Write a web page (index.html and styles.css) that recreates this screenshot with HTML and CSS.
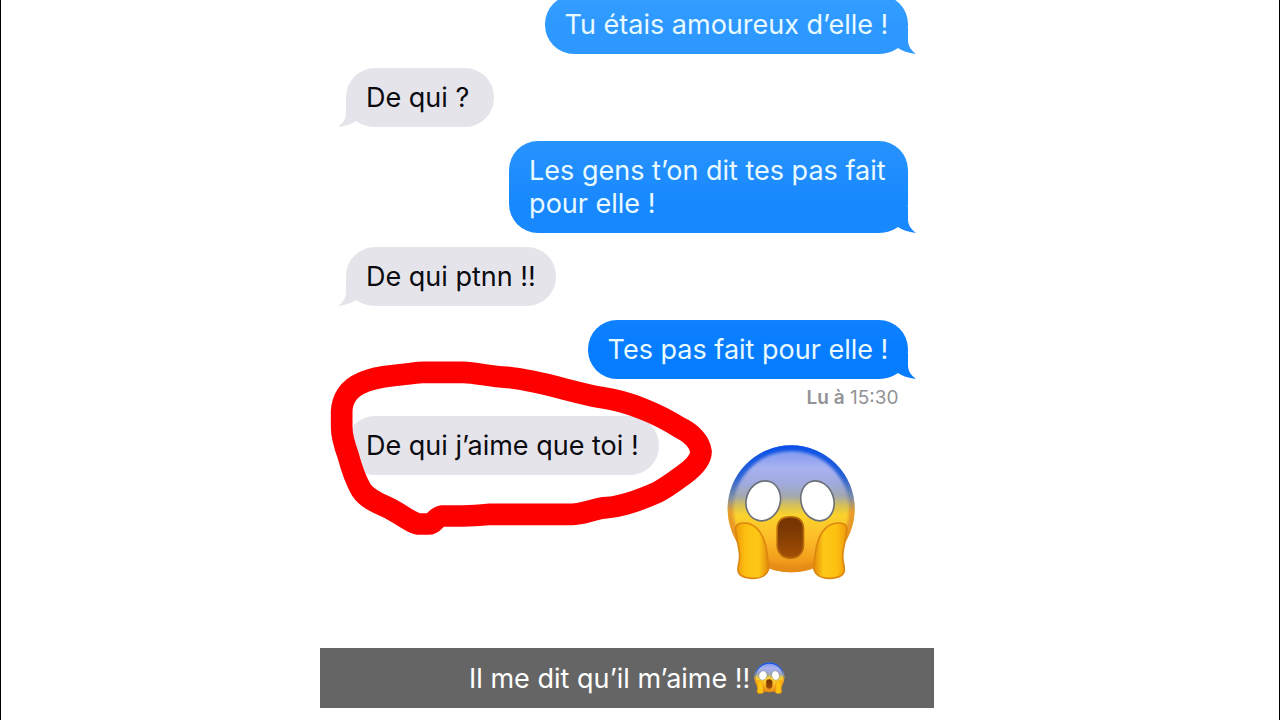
FILE: index.html
```html
<!DOCTYPE html>
<html lang="fr">
<head>
<meta charset="utf-8">
<meta name="viewport" content="width=device-width, initial-scale=1">
<title>Conversation</title>
<link rel="stylesheet" href="styles.css">
</head>
<body>
<svg class="defs" aria-hidden="true">
  <defs>
    <linearGradient id="skin" x1="0" y1="0" x2="0" y2="1">
      <stop offset="0" stop-color="#7391f0"/>
      <stop offset=".18" stop-color="#a9b2f0"/>
      <stop offset=".3" stop-color="#a0aade"/>
      <stop offset=".4" stop-color="#a3a9b0"/>
      <stop offset=".47" stop-color="#d4bf5a"/>
      <stop offset=".55" stop-color="#fbd32c"/>
      <stop offset=".75" stop-color="#fdba28"/>
      <stop offset="1" stop-color="#e98a13"/>
    </linearGradient>
    <linearGradient id="edge" x1="0" y1="0" x2="0" y2="1">
      <stop offset="0" stop-color="#0a50e8"/>
      <stop offset=".25" stop-color="#2862d5"/>
      <stop offset=".42" stop-color="#8490a0"/>
      <stop offset=".52" stop-color="#e89d2c"/>
      <stop offset="1" stop-color="#e58a16"/>
    </linearGradient>
    <linearGradient id="mouth" x1="0" y1="0" x2="0" y2="1">
      <stop offset="0" stop-color="#743402"/>
      <stop offset=".35" stop-color="#7d3a02"/>
      <stop offset="1" stop-color="#a45006"/>
    </linearGradient>
    <linearGradient id="hand" x1="0" y1="0" x2="1" y2="0">
      <stop offset="0" stop-color="#f09a0c"/>
      <stop offset=".3" stop-color="#fdc010"/>
      <stop offset=".7" stop-color="#fdc816"/>
      <stop offset="1" stop-color="#e48a0c"/>
    </linearGradient>
    <filter id="soft" x="-10%" y="-10%" width="120%" height="120%"><feGaussianBlur stdDeviation="5"/></filter>
    <clipPath id="head"><circle cx="245" cy="236" r="191"/></clipPath>
    <symbol id="scream" viewBox="52 38 388 412">
      <circle cx="245" cy="236" r="191" fill="url(#skin)"/>
      <g clip-path="url(#head)"><circle cx="245" cy="236" r="188" fill="none" stroke="url(#edge)" stroke-width="28" filter="url(#soft)"/></g>
      <ellipse cx="161" cy="212" rx="51" ry="61" transform="rotate(18 161 212)" fill="#fff" stroke="#6c7078" stroke-width="5"/>
      <ellipse cx="324" cy="212" rx="49" ry="61" transform="rotate(-18 324 212)" fill="#fff" stroke="#6c7078" stroke-width="5"/>
      <path d="M243 260c26 0 39 14 39 37v48c0 24-16 39-39 39s-40-15-40-39v-48c0-23 13-37 40-37z" fill="url(#mouth)" stroke="#b8690c" stroke-width="5"/>
      <path id="palm" d="M78 290C84 276 115 273 138 291C164 314 170 345 173 375C174 392 180 407 176 420C169 440 146 446 126 445C105 444 86 437 85 420C84 408 90 398 90 380C90 350 76 318 78 290Z" fill="url(#hand)" stroke="#dc860f" stroke-width="5"/>
      <use href="#palm" transform="matrix(-1 0 0 1 490 0)"/>
    </symbol>
    <symbol id="tail" viewBox="0 0 30 26">
      <path d="M0 0H21V12C21 19 25 23 29 26C21 25 15 23 11 20C8 22 4 24 0 25Z"/>
    </symbol>
  </defs>
</svg>
<main class="page">
  <section class="chat" aria-label="Messages">
    <div class="bubble sent tone-1">Tu étais amoureux d’elle !<svg class="tail" aria-hidden="true"><use href="#tail"/></svg></div>
    <div class="bubble received">De qui ?<svg class="tail" aria-hidden="true"><use href="#tail"/></svg></div>
    <div class="bubble sent tone-2">Les gens t’on dit tes pas fait pour elle !<svg class="tail" aria-hidden="true"><use href="#tail"/></svg></div>
    <div class="bubble received">De qui ptnn !!<svg class="tail" aria-hidden="true"><use href="#tail"/></svg></div>
    <div class="bubble sent tone-3">Tes pas fait pour elle !<svg class="tail" aria-hidden="true"><use href="#tail"/></svg></div>
    <p class="receipt"><b>Lu à</b> 15:30</p>
    <div class="last">
      <div class="bubble received">De qui j’aime que toi !
        <svg class="ring" viewBox="0 0 1200 630" aria-hidden="true"><path d="M368 528C345 530 345 552 325 552H300C275 552 235 516 200 501C165 486 140 474 124 450C102 412 92 375 84 345C72 312 65 290 65 260V215C66 178 86 145 125 129C165 109 225 106 270 101C285 99 295 97 310 97H430C470 98 510 110 560 112C660 122 750 155 840 172C930 184 1020 225 1078 262C1115 279 1140 307 1143 335C1143 360 1120 383 1090 405C1060 427 1038 444 1010 458C960 480 905 500 860 503C825 505 790 523 755 523H510C480 526 460 528 430 528Z"/></svg>
      </div>
      <svg class="emoji" role="img" aria-label="Visage qui hurle de peur"><use href="#scream"/></svg>
    </div>
  </section>
  <p class="caption">Il me dit qu’il m’aime !!<svg class="mini" role="img" aria-label="Visage qui hurle de peur"><use href="#scream"/></svg></p>
</main>
</body>
</html>
```
FILE: styles.css
```css
* { box-sizing: border-box; }

body {
  margin: 0;
  min-height: 100vh;
  overflow: hidden;
  background: #fff;
  box-shadow: inset 1px 0 #000, inset -1px 0 #000;
  color: #0b0b10;
  font: 27px/33px Inter, "Liberation Sans", sans-serif;
}

.defs { position: absolute; width: 0; height: 0; }

.page {
  width: 48%;
  margin-left: 25%;
}

.chat {
  display: flex;
  flex-direction: column;
  align-items: flex-start;
  gap: 14px;
  margin-top: -5px;
  padding: 0 26px;
}

.bubble {
  position: relative;
  max-width: 71%;
  min-width: 148px;
  padding: 13px 20px;
  border-radius: 29px;
}

.sent {
  align-self: flex-end;
  color: #e9faff;
}

.received {
  background: #e5e4eb;
  fill: #e5e4eb;
}

.tone-1 { background: linear-gradient(#35a0ff, #2d98ff 50%); fill: #2d98ff; }
.tone-2 { background: linear-gradient(#2793fd, #1888ff 70%); fill: #1888ff; }
.tone-3 { background: linear-gradient(#1082ff, #067cff 50%); fill: #067cff; }

.tail {
  position: absolute;
  right: -9px;
  bottom: 0;
  width: 30px;
  height: 26px;
}

.received .tail {
  right: auto;
  left: -9px;
  transform: scaleX(-1);
}

.receipt {
  align-self: flex-end;
  margin: -7px 10px 0 0;
  color: #929297;
  font-size: 19px;
  line-height: 24px;
}

.receipt b { font-weight: 600; }

.last {
  display: flex;
  justify-content: space-between;
  align-items: flex-start;
  width: 100%;
  margin-top: -8px;
}

.ring {
  position: absolute;
  left: -26px;
  top: -76px;
  width: 400px;
  height: 210px;
  fill: none;
  stroke: #fe0000;
  stroke-width: 65;
  stroke-linejoin: round;
}

.emoji {
  width: 129px;
  height: 137px;
  margin: 27px 52px 0 0;
}

.caption {
  display: flex;
  align-items: center;
  justify-content: center;
  gap: 4px;
  margin: 68px 0 0;
  min-height: 60px;
  background: #656565;
  color: #fff;
}

.mini {
  width: 31px;
  height: 32px;
}
```
